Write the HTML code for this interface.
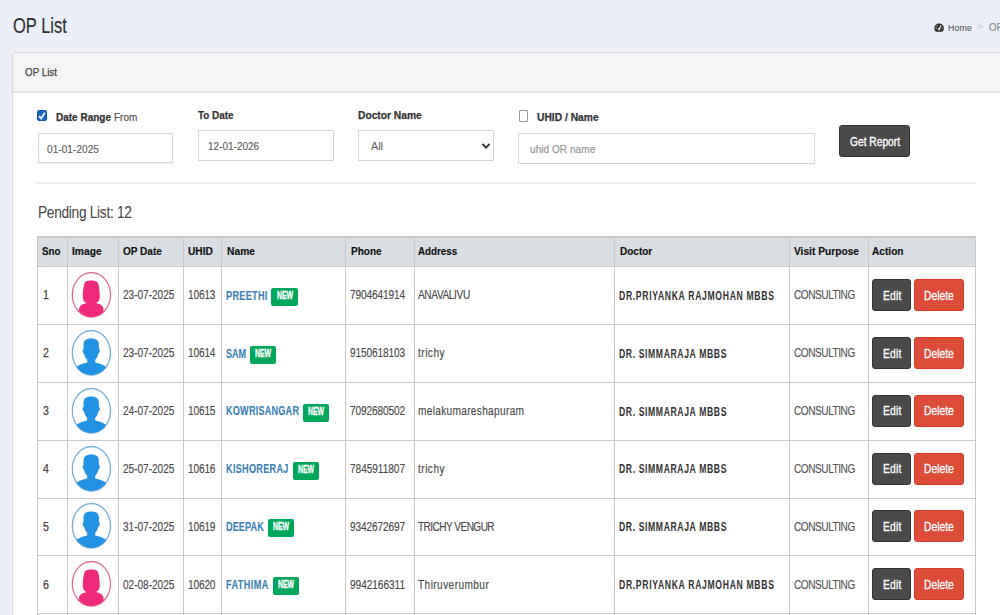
<!DOCTYPE html>
<html><head><meta charset="utf-8"><style>
html,body{margin:0;padding:0;}
body{width:1000px;height:615px;overflow:hidden;position:relative;background:#ebeff7;font-family:"Liberation Sans",sans-serif;}
.t{position:absolute;white-space:nowrap;transform-origin:0 50%;}
</style></head><body>
<svg width="0" height="0" style="position:absolute">
<defs>
<clipPath id="ce"><ellipse cx="20.4" cy="22.8" rx="19.1" ry="22.2"/></clipPath>
<g id="avf">
<ellipse cx="20.4" cy="22.8" rx="19.1" ry="22.2" fill="#fff" stroke="#dc6f90" stroke-width="1.3"/>
<g clip-path="url(#ce)" fill="#ef2a7a">
<path d="M15.5 31C13 30 11.8 28 11.8 24.5 11.8 20 12.4 15 13.2 12.2 14 9.6 15.8 8.6 20.3 8.6S26.6 9.6 27.4 12.2C28.2 15 28.8 20 28.8 24.5 28.8 28 27.6 30 25.1 31 28.5 32 31.8 33 32.5 36.5V47H8.1V36.5C8.8 33 12.1 32 15.5 31Z"/>
</g>
</g>
<g id="avm">
<ellipse cx="20.4" cy="22.8" rx="19.1" ry="22.2" fill="#fff" stroke="#72aedb" stroke-width="1.3"/>
<g clip-path="url(#ce)" fill="#2192e4">
<path d="M12.5 15.5C12.5 10.6 14.8 8.6 20.2 8.6S27.9 10.6 27.9 15.5V19C28.7 19.2 28.9 20.2 28.7 21.5 28.5 22.8 28.1 23.3 27.5 23.3 26.9 26.5 25.4 28.8 24.2 29.8V32.4C28.5 33.4 32.5 34.2 35.5 37.2V47H5V37.2C8 34.2 12 33.4 16.2 32.4V29.8C15 28.8 13.5 26.5 12.9 23.3 12.3 23.3 11.9 22.8 11.7 21.5 11.5 20.2 11.7 19.2 12.5 19Z"/>
</g>
</g>
</defs></svg>
<div class="t" style="left:13.20px;top:14.68px;font-size:22px;line-height:22px;color:#2f2f2f;transform:scaleX(0.7500);-webkit-text-stroke:0.15px #2f2f2f;">OP List</div>
<svg style="position:absolute;left:934px;top:22.5px" width="10.2" height="9.2" viewBox="0 0 11 10"><path d="M5.5 0.5C2.5 0.5 0.3 2.8 0.3 5.6c0 1.5.6 2.8 1.6 3.8h7.2c1-1 1.6-2.3 1.6-3.8C10.7 2.8 8.5.5 5.5.5z" fill="#333"/><path d="M5.5 6.6L7.6 2.6" stroke="#fff" stroke-width="1.2"/><circle cx="5.4" cy="6.8" r="1.1" fill="#fff"/><circle cx="2.3" cy="5.6" r=".6" fill="#fff"/><circle cx="3.3" cy="3" r=".6" fill="#fff"/><circle cx="8.7" cy="5.6" r=".6" fill="#fff"/></svg>
<div class="t" style="left:948.10px;top:22.70px;font-size:9.8px;line-height:9.8px;color:#555;transform:scaleX(0.9000);-webkit-text-stroke:0.1px #555;letter-spacing:0.131px;">Home</div>
<div class="t" style="left:977.50px;top:23.43px;font-size:8px;line-height:8px;color:#cfcfcf;transform:scaleX(1.0702);-webkit-text-stroke:0.3px #cfcfcf;">&gt;</div>
<div class="t" style="left:989.00px;top:22.73px;font-size:10px;line-height:10px;color:#888;transform:scaleX(0.9690);-webkit-text-stroke:0.1px #888;">OP</div>
<div style="position:absolute;left:9px;top:48px;width:1000px;height:600px;background:#eef1f6;border-radius:4px;"></div>
<div style="position:absolute;left:12px;top:52px;width:1000px;height:600px;background:#fff;border:1px solid #d6dade;border-radius:3px;box-sizing:border-box;"></div>
<div style="position:absolute;left:13px;top:53px;width:1000px;height:37.5px;background:#f5f5f5;border-radius:2px 0 0 0;"></div>
<div style="position:absolute;left:13px;top:90.5px;width:1000px;height:2px;background:#e4e4e4;"></div>
<div class="t" style="left:25.00px;top:66.97px;font-size:11.5px;line-height:11.5px;color:#444;transform:scaleX(0.8534);-webkit-text-stroke:0.25px #444;">OP List</div>
<div style="position:absolute;left:37px;top:110px;width:10px;height:11px;background:#1a67c8;border:1px solid #1257a8;box-sizing:border-box;border-radius:2px"></div>
<svg style="position:absolute;left:37px;top:110px" width="10" height="11" viewBox="0 0 10 11"><path d="M2 6.2L4.1 8.5 7.8 2.8" fill="none" stroke="#eaf4ff" stroke-width="1.8"/></svg>
<div class="t" style="left:55.70px;top:111.87px;font-size:11.5px;line-height:11.5px;color:#333;font-weight:bold;transform:scaleX(0.8693);-webkit-text-stroke:0.25px #333;">Date Range</div>
<div class="t" style="left:113.80px;top:111.87px;font-size:11.5px;line-height:11.5px;color:#555;transform:scaleX(0.8684);-webkit-text-stroke:0.25px #555;">From</div>
<div style="position:absolute;left:38px;top:133px;width:135px;height:30px;background:#fff;border:1px solid #d5d5d5;box-sizing:border-box;box-shadow:0 1px 1px rgba(0,0,0,.04)"></div>
<div class="t" style="left:47.40px;top:143.61px;font-size:11.8px;line-height:11.8px;color:#606060;transform:scaleX(0.8500);-webkit-text-stroke:0.15px #606060;letter-spacing:0.081px;">01-01-2025</div>
<div class="t" style="left:198.00px;top:110.27px;font-size:11.5px;line-height:11.5px;color:#333;font-weight:bold;transform:scaleX(0.8592);-webkit-text-stroke:0.25px #333;">To Date</div>
<div style="position:absolute;left:198px;top:130px;width:136px;height:31px;background:#fff;border:1px solid #d5d5d5;box-sizing:border-box;"></div>
<div class="t" style="left:208.40px;top:141.01px;font-size:11.8px;line-height:11.8px;color:#606060;transform:scaleX(0.8500);-webkit-text-stroke:0.15px #606060;letter-spacing:-0.013px;">12-01-2026</div>
<div class="t" style="left:358.30px;top:110.27px;font-size:11.5px;line-height:11.5px;color:#333;font-weight:bold;transform:scaleX(0.8900);-webkit-text-stroke:0.25px #333;">Doctor Name</div>
<div style="position:absolute;left:358px;top:130px;width:136px;height:31px;background:#fff;border:1px solid #d5d5d5;box-sizing:border-box;"></div>
<div class="t" style="left:370.80px;top:141.01px;font-size:11.8px;line-height:11.8px;color:#666;transform:scaleX(0.9150);-webkit-text-stroke:0.15px #666;">All</div>
<svg style="position:absolute;left:481px;top:142px" width="10" height="8" viewBox="0 0 10 8"><path d="M1.5 2L5 5.6 8.5 2" fill="none" stroke="#333" stroke-width="1.9"/></svg>
<div style="position:absolute;left:518.5px;top:110px;width:9.5px;height:11.5px;background:#fff;border:1.3px solid #9c9c9c;border-radius:1px;box-sizing:border-box"></div>
<div class="t" style="left:537.20px;top:112.47px;font-size:11.5px;line-height:11.5px;color:#333;font-weight:bold;transform:scaleX(0.8925);-webkit-text-stroke:0.25px #333;">UHID / Name</div>
<div style="position:absolute;left:518px;top:133px;width:297px;height:31px;background:#fff;border:1px solid #d5d5d5;box-sizing:border-box;"></div>
<div class="t" style="left:529.50px;top:143.61px;font-size:11.8px;line-height:11.8px;color:#9a9a9a;transform:scaleX(0.8500);-webkit-text-stroke:0.25px #9a9a9a;letter-spacing:0.062px;">uhid OR name</div>
<div style="position:absolute;left:839px;top:125px;width:71px;height:32px;background:#4a4a4a;border-radius:3px;border:1px solid #333;box-sizing:border-box;"></div>
<div class="t" style="left:850.00px;top:136.34px;font-size:12px;line-height:12px;color:#fff;transform:scaleX(0.8500);-webkit-text-stroke:0.35px #fff;letter-spacing:0.013px;">Get Report</div>
<div style="position:absolute;left:36px;top:182px;width:940px;height:2px;background:#ededed;"></div>
<div class="t" style="left:37.90px;top:204.69px;font-size:15.6px;line-height:15.6px;color:#474747;transform:scaleX(0.8800);-webkit-text-stroke:0.05px #474747;letter-spacing:-0.345px;">Pending List: 12</div>
<div style="position:absolute;left:37px;top:237px;width:938px;height:29px;background:#d9dee3;"></div>
<div style="position:absolute;left:37px;top:236px;width:939px;height:2px;background:#c6c9cc;"></div>
<div style="position:absolute;left:37px;top:266px;width:939px;height:1px;background:#c8c8c8;"></div>
<div style="position:absolute;left:37px;top:324px;width:939px;height:1px;background:#c8c8c8;"></div>
<div style="position:absolute;left:37px;top:382px;width:939px;height:1px;background:#c8c8c8;"></div>
<div style="position:absolute;left:37px;top:440px;width:939px;height:1px;background:#c8c8c8;"></div>
<div style="position:absolute;left:37px;top:498px;width:939px;height:1px;background:#c8c8c8;"></div>
<div style="position:absolute;left:37px;top:555px;width:939px;height:1px;background:#c8c8c8;"></div>
<div style="position:absolute;left:37px;top:613px;width:939px;height:1px;background:#c8c8c8;"></div>
<div style="position:absolute;left:37px;top:236px;width:1px;height:400px;background:#c9c9c9;"></div>
<div style="position:absolute;left:67px;top:236px;width:1px;height:400px;background:#c9c9c9;"></div>
<div style="position:absolute;left:118px;top:236px;width:1px;height:400px;background:#c9c9c9;"></div>
<div style="position:absolute;left:183px;top:236px;width:1px;height:400px;background:#c9c9c9;"></div>
<div style="position:absolute;left:221px;top:236px;width:1px;height:400px;background:#c9c9c9;"></div>
<div style="position:absolute;left:345px;top:236px;width:1px;height:400px;background:#c9c9c9;"></div>
<div style="position:absolute;left:414px;top:236px;width:1px;height:400px;background:#c9c9c9;"></div>
<div style="position:absolute;left:614px;top:236px;width:1px;height:400px;background:#c9c9c9;"></div>
<div style="position:absolute;left:789px;top:236px;width:1px;height:400px;background:#c9c9c9;"></div>
<div style="position:absolute;left:868px;top:236px;width:1px;height:400px;background:#c9c9c9;"></div>
<div style="position:absolute;left:975px;top:236px;width:1px;height:400px;background:#c9c9c9;"></div>
<div class="t" style="left:42.00px;top:245.69px;font-size:11px;line-height:11px;color:#111;font-weight:bold;transform:scaleX(0.8856);-webkit-text-stroke:0.15px #111;">Sno</div>
<div class="t" style="left:72.00px;top:245.69px;font-size:11px;line-height:11px;color:#111;font-weight:bold;transform:scaleX(0.9311);-webkit-text-stroke:0.15px #111;">Image</div>
<div class="t" style="left:123.20px;top:245.69px;font-size:11px;line-height:11px;color:#111;font-weight:bold;transform:scaleX(0.9109);-webkit-text-stroke:0.15px #111;">OP Date</div>
<div class="t" style="left:187.60px;top:245.69px;font-size:11px;line-height:11px;color:#111;font-weight:bold;transform:scaleX(0.9261);-webkit-text-stroke:0.15px #111;">UHID</div>
<div class="t" style="left:226.50px;top:245.69px;font-size:11px;line-height:11px;color:#111;font-weight:bold;transform:scaleX(0.9346);-webkit-text-stroke:0.15px #111;">Name</div>
<div class="t" style="left:350.60px;top:245.69px;font-size:11px;line-height:11px;color:#111;font-weight:bold;transform:scaleX(0.9103);-webkit-text-stroke:0.15px #111;">Phone</div>
<div class="t" style="left:418.40px;top:245.69px;font-size:11px;line-height:11px;color:#111;font-weight:bold;transform:scaleX(0.8906);-webkit-text-stroke:0.15px #111;">Address</div>
<div class="t" style="left:619.50px;top:245.69px;font-size:11px;line-height:11px;color:#111;font-weight:bold;transform:scaleX(0.9085);-webkit-text-stroke:0.15px #111;">Doctor</div>
<div class="t" style="left:793.50px;top:245.69px;font-size:11px;line-height:11px;color:#111;font-weight:bold;transform:scaleX(0.9272);-webkit-text-stroke:0.15px #111;">Visit Purpose</div>
<div class="t" style="left:872.00px;top:245.69px;font-size:11px;line-height:11px;color:#111;font-weight:bold;transform:scaleX(0.9205);-webkit-text-stroke:0.15px #111;">Action</div>
<div class="t" style="left:43.00px;top:289.44px;font-size:12px;line-height:12px;color:#444;transform:scaleX(0.8800);-webkit-text-stroke:0.25px #444;">1</div>
<svg style="position:absolute;left:71px;top:272px" width="41" height="47" viewBox="0 0 41 47"><use href="#avf"/></svg>
<div class="t" style="left:123.40px;top:289.44px;font-size:12px;line-height:12px;color:#4a4a4a;transform:scaleX(0.8400);-webkit-text-stroke:0.15px #4a4a4a;letter-spacing:-0.031px;">23-07-2025</div>
<div class="t" style="left:187.60px;top:289.44px;font-size:12px;line-height:12px;color:#4a4a4a;transform:scaleX(0.8400);-webkit-text-stroke:0.15px #4a4a4a;letter-spacing:-0.174px;">10613</div>
<div class="t" style="left:226.00px;top:289.74px;font-size:12px;line-height:12px;color:#3a80b4;font-weight:bold;transform:scaleX(0.7600);-webkit-text-stroke:0.1px #3a80b4;letter-spacing:0.390px;">PREETHI</div>
<div style="position:absolute;left:271.4px;top:288px;width:26.2px;height:18px;background:#00a65a;border-radius:2px;"></div>
<div class="t" style="left:276.60px;top:291.44px;font-size:10px;line-height:10px;color:#fff;font-weight:bold;transform:scaleX(0.6901);-webkit-text-stroke:0.3px #fff;">NEW</div>
<div class="t" style="left:350.40px;top:289.44px;font-size:12px;line-height:12px;color:#4a4a4a;transform:scaleX(0.8400);-webkit-text-stroke:0.15px #4a4a4a;letter-spacing:-0.126px;">7904641914</div>
<div class="t" style="left:418.40px;top:289.44px;font-size:12px;line-height:12px;color:#4a4a4a;transform:scaleX(0.8400);-webkit-text-stroke:0.15px #4a4a4a;letter-spacing:-0.435px;">ANAVALIVU</div>
<div class="t" style="left:619.40px;top:289.84px;font-size:12px;line-height:12px;color:#333;font-weight:bold;transform:scaleX(0.7200);letter-spacing:0.919px;">DR.PRIYANKA RAJMOHAN MBBS</div>
<div class="t" style="left:794.00px;top:289.44px;font-size:12px;line-height:12px;color:#555;transform:scaleX(0.8400);-webkit-text-stroke:0.15px #555;letter-spacing:-0.540px;">CONSULTING</div>
<div style="position:absolute;left:872px;top:279px;width:39px;height:32px;background:#4a4a4a;border-radius:3px;border:1px solid #333;box-sizing:border-box;"></div>
<div class="t" style="left:882.60px;top:289.64px;font-size:12px;line-height:12px;color:#fff;transform:scaleX(0.8600);-webkit-text-stroke:0.3px #fff;letter-spacing:0.179px;">Edit</div>
<div style="position:absolute;left:914px;top:279px;width:50px;height:32px;background:#dd4b39;border-radius:3px;border:1px solid #d33a27;box-sizing:border-box;"></div>
<div class="t" style="left:924.40px;top:289.64px;font-size:12px;line-height:12px;color:#fff;transform:scaleX(0.8600);-webkit-text-stroke:0.3px #fff;letter-spacing:-0.026px;">Delete</div>
<div class="t" style="left:43.00px;top:347.31px;font-size:12px;line-height:12px;color:#444;transform:scaleX(0.8800);-webkit-text-stroke:0.25px #444;">2</div>
<svg style="position:absolute;left:71px;top:330px" width="41" height="47" viewBox="0 0 41 47"><use href="#avm"/></svg>
<div class="t" style="left:123.40px;top:347.31px;font-size:12px;line-height:12px;color:#4a4a4a;transform:scaleX(0.8400);-webkit-text-stroke:0.15px #4a4a4a;letter-spacing:-0.031px;">23-07-2025</div>
<div class="t" style="left:187.60px;top:347.31px;font-size:12px;line-height:12px;color:#4a4a4a;transform:scaleX(0.8400);-webkit-text-stroke:0.15px #4a4a4a;letter-spacing:-0.174px;">10614</div>
<div class="t" style="left:226.00px;top:347.61px;font-size:12px;line-height:12px;color:#3a80b4;font-weight:bold;transform:scaleX(0.7600);-webkit-text-stroke:0.1px #3a80b4;letter-spacing:-0.117px;">SAM</div>
<div style="position:absolute;left:249.8px;top:346px;width:26.2px;height:18px;background:#00a65a;border-radius:2px;"></div>
<div class="t" style="left:255.00px;top:349.44px;font-size:10px;line-height:10px;color:#fff;font-weight:bold;transform:scaleX(0.6901);-webkit-text-stroke:0.3px #fff;">NEW</div>
<div class="t" style="left:350.40px;top:347.31px;font-size:12px;line-height:12px;color:#4a4a4a;transform:scaleX(0.8400);-webkit-text-stroke:0.15px #4a4a4a;letter-spacing:-0.126px;">9150618103</div>
<div class="t" style="left:418.40px;top:347.31px;font-size:12px;line-height:12px;color:#4a4a4a;transform:scaleX(0.8400);-webkit-text-stroke:0.15px #4a4a4a;letter-spacing:0.579px;">trichy</div>
<div class="t" style="left:619.40px;top:347.71px;font-size:12px;line-height:12px;color:#333;font-weight:bold;transform:scaleX(0.7200);letter-spacing:0.839px;">DR. SIMMARAJA MBBS</div>
<div class="t" style="left:794.00px;top:347.31px;font-size:12px;line-height:12px;color:#555;transform:scaleX(0.8400);-webkit-text-stroke:0.15px #555;letter-spacing:-0.540px;">CONSULTING</div>
<div style="position:absolute;left:872px;top:337px;width:39px;height:32px;background:#4a4a4a;border-radius:3px;border:1px solid #333;box-sizing:border-box;"></div>
<div class="t" style="left:882.60px;top:347.51px;font-size:12px;line-height:12px;color:#fff;transform:scaleX(0.8600);-webkit-text-stroke:0.3px #fff;letter-spacing:0.179px;">Edit</div>
<div style="position:absolute;left:914px;top:337px;width:50px;height:32px;background:#dd4b39;border-radius:3px;border:1px solid #d33a27;box-sizing:border-box;"></div>
<div class="t" style="left:924.40px;top:347.51px;font-size:12px;line-height:12px;color:#fff;transform:scaleX(0.8600);-webkit-text-stroke:0.3px #fff;letter-spacing:-0.026px;">Delete</div>
<div class="t" style="left:43.00px;top:405.18px;font-size:12px;line-height:12px;color:#444;transform:scaleX(0.8800);-webkit-text-stroke:0.25px #444;">3</div>
<svg style="position:absolute;left:71px;top:388px" width="41" height="47" viewBox="0 0 41 47"><use href="#avm"/></svg>
<div class="t" style="left:123.40px;top:405.18px;font-size:12px;line-height:12px;color:#4a4a4a;transform:scaleX(0.8400);-webkit-text-stroke:0.15px #4a4a4a;letter-spacing:-0.031px;">24-07-2025</div>
<div class="t" style="left:187.60px;top:405.18px;font-size:12px;line-height:12px;color:#4a4a4a;transform:scaleX(0.8400);-webkit-text-stroke:0.15px #4a4a4a;letter-spacing:-0.174px;">10615</div>
<div class="t" style="left:226.00px;top:405.48px;font-size:12px;line-height:12px;color:#3a80b4;font-weight:bold;transform:scaleX(0.7600);-webkit-text-stroke:0.1px #3a80b4;letter-spacing:0.272px;">KOWRISANGAR</div>
<div style="position:absolute;left:303.0px;top:404px;width:26.2px;height:18px;background:#00a65a;border-radius:2px;"></div>
<div class="t" style="left:308.20px;top:407.44px;font-size:10px;line-height:10px;color:#fff;font-weight:bold;transform:scaleX(0.6901);-webkit-text-stroke:0.3px #fff;">NEW</div>
<div class="t" style="left:350.40px;top:405.18px;font-size:12px;line-height:12px;color:#4a4a4a;transform:scaleX(0.8400);-webkit-text-stroke:0.15px #4a4a4a;letter-spacing:-0.126px;">7092680502</div>
<div class="t" style="left:418.40px;top:405.18px;font-size:12px;line-height:12px;color:#4a4a4a;transform:scaleX(0.8400);-webkit-text-stroke:0.15px #4a4a4a;letter-spacing:0.398px;">melakumareshapuram</div>
<div class="t" style="left:619.40px;top:405.58px;font-size:12px;line-height:12px;color:#333;font-weight:bold;transform:scaleX(0.7200);letter-spacing:0.839px;">DR. SIMMARAJA MBBS</div>
<div class="t" style="left:794.00px;top:405.18px;font-size:12px;line-height:12px;color:#555;transform:scaleX(0.8400);-webkit-text-stroke:0.15px #555;letter-spacing:-0.540px;">CONSULTING</div>
<div style="position:absolute;left:872px;top:395px;width:39px;height:32px;background:#4a4a4a;border-radius:3px;border:1px solid #333;box-sizing:border-box;"></div>
<div class="t" style="left:882.60px;top:405.38px;font-size:12px;line-height:12px;color:#fff;transform:scaleX(0.8600);-webkit-text-stroke:0.3px #fff;letter-spacing:0.179px;">Edit</div>
<div style="position:absolute;left:914px;top:395px;width:50px;height:32px;background:#dd4b39;border-radius:3px;border:1px solid #d33a27;box-sizing:border-box;"></div>
<div class="t" style="left:924.40px;top:405.38px;font-size:12px;line-height:12px;color:#fff;transform:scaleX(0.8600);-webkit-text-stroke:0.3px #fff;letter-spacing:-0.026px;">Delete</div>
<div class="t" style="left:43.00px;top:463.05px;font-size:12px;line-height:12px;color:#444;transform:scaleX(0.8800);-webkit-text-stroke:0.25px #444;">4</div>
<svg style="position:absolute;left:71px;top:446px" width="41" height="47" viewBox="0 0 41 47"><use href="#avm"/></svg>
<div class="t" style="left:123.40px;top:463.05px;font-size:12px;line-height:12px;color:#4a4a4a;transform:scaleX(0.8400);-webkit-text-stroke:0.15px #4a4a4a;letter-spacing:-0.031px;">25-07-2025</div>
<div class="t" style="left:187.60px;top:463.05px;font-size:12px;line-height:12px;color:#4a4a4a;transform:scaleX(0.8400);-webkit-text-stroke:0.15px #4a4a4a;letter-spacing:-0.174px;">10616</div>
<div class="t" style="left:226.00px;top:463.35px;font-size:12px;line-height:12px;color:#3a80b4;font-weight:bold;transform:scaleX(0.7600);-webkit-text-stroke:0.1px #3a80b4;letter-spacing:0.382px;">KISHORERAJ</div>
<div style="position:absolute;left:292.5px;top:462px;width:26.2px;height:18px;background:#00a65a;border-radius:2px;"></div>
<div class="t" style="left:297.70px;top:465.44px;font-size:10px;line-height:10px;color:#fff;font-weight:bold;transform:scaleX(0.6901);-webkit-text-stroke:0.3px #fff;">NEW</div>
<div class="t" style="left:350.40px;top:463.05px;font-size:12px;line-height:12px;color:#4a4a4a;transform:scaleX(0.8400);-webkit-text-stroke:0.15px #4a4a4a;letter-spacing:-0.037px;">7845911807</div>
<div class="t" style="left:418.40px;top:463.05px;font-size:12px;line-height:12px;color:#4a4a4a;transform:scaleX(0.8400);-webkit-text-stroke:0.15px #4a4a4a;letter-spacing:0.579px;">trichy</div>
<div class="t" style="left:619.40px;top:463.45px;font-size:12px;line-height:12px;color:#333;font-weight:bold;transform:scaleX(0.7200);letter-spacing:0.839px;">DR. SIMMARAJA MBBS</div>
<div class="t" style="left:794.00px;top:463.05px;font-size:12px;line-height:12px;color:#555;transform:scaleX(0.8400);-webkit-text-stroke:0.15px #555;letter-spacing:-0.540px;">CONSULTING</div>
<div style="position:absolute;left:872px;top:453px;width:39px;height:32px;background:#4a4a4a;border-radius:3px;border:1px solid #333;box-sizing:border-box;"></div>
<div class="t" style="left:882.60px;top:463.25px;font-size:12px;line-height:12px;color:#fff;transform:scaleX(0.8600);-webkit-text-stroke:0.3px #fff;letter-spacing:0.179px;">Edit</div>
<div style="position:absolute;left:914px;top:453px;width:50px;height:32px;background:#dd4b39;border-radius:3px;border:1px solid #d33a27;box-sizing:border-box;"></div>
<div class="t" style="left:924.40px;top:463.25px;font-size:12px;line-height:12px;color:#fff;transform:scaleX(0.8600);-webkit-text-stroke:0.3px #fff;letter-spacing:-0.026px;">Delete</div>
<div class="t" style="left:43.00px;top:520.92px;font-size:12px;line-height:12px;color:#444;transform:scaleX(0.8800);-webkit-text-stroke:0.25px #444;">5</div>
<svg style="position:absolute;left:71px;top:503px" width="41" height="47" viewBox="0 0 41 47"><use href="#avm"/></svg>
<div class="t" style="left:123.40px;top:520.92px;font-size:12px;line-height:12px;color:#4a4a4a;transform:scaleX(0.8400);-webkit-text-stroke:0.15px #4a4a4a;letter-spacing:-0.031px;">31-07-2025</div>
<div class="t" style="left:187.60px;top:520.92px;font-size:12px;line-height:12px;color:#4a4a4a;transform:scaleX(0.8400);-webkit-text-stroke:0.15px #4a4a4a;letter-spacing:-0.174px;">10619</div>
<div class="t" style="left:226.00px;top:521.22px;font-size:12px;line-height:12px;color:#3a80b4;font-weight:bold;transform:scaleX(0.7600);-webkit-text-stroke:0.1px #3a80b4;letter-spacing:0.125px;">DEEPAK</div>
<div style="position:absolute;left:267.7px;top:519px;width:26.2px;height:18px;background:#00a65a;border-radius:2px;"></div>
<div class="t" style="left:272.90px;top:522.43px;font-size:10px;line-height:10px;color:#fff;font-weight:bold;transform:scaleX(0.6901);-webkit-text-stroke:0.3px #fff;">NEW</div>
<div class="t" style="left:350.40px;top:520.92px;font-size:12px;line-height:12px;color:#4a4a4a;transform:scaleX(0.8400);-webkit-text-stroke:0.15px #4a4a4a;letter-spacing:-0.126px;">9342672697</div>
<div class="t" style="left:418.40px;top:520.92px;font-size:12px;line-height:12px;color:#4a4a4a;transform:scaleX(0.8400);-webkit-text-stroke:0.15px #4a4a4a;letter-spacing:-0.656px;">TRICHY VENGUR</div>
<div class="t" style="left:619.40px;top:521.32px;font-size:12px;line-height:12px;color:#333;font-weight:bold;transform:scaleX(0.7200);letter-spacing:0.839px;">DR. SIMMARAJA MBBS</div>
<div class="t" style="left:794.00px;top:520.92px;font-size:12px;line-height:12px;color:#555;transform:scaleX(0.8400);-webkit-text-stroke:0.15px #555;letter-spacing:-0.540px;">CONSULTING</div>
<div style="position:absolute;left:872px;top:510px;width:39px;height:32px;background:#4a4a4a;border-radius:3px;border:1px solid #333;box-sizing:border-box;"></div>
<div class="t" style="left:882.60px;top:521.12px;font-size:12px;line-height:12px;color:#fff;transform:scaleX(0.8600);-webkit-text-stroke:0.3px #fff;letter-spacing:0.179px;">Edit</div>
<div style="position:absolute;left:914px;top:510px;width:50px;height:32px;background:#dd4b39;border-radius:3px;border:1px solid #d33a27;box-sizing:border-box;"></div>
<div class="t" style="left:924.40px;top:521.12px;font-size:12px;line-height:12px;color:#fff;transform:scaleX(0.8600);-webkit-text-stroke:0.3px #fff;letter-spacing:-0.026px;">Delete</div>
<div class="t" style="left:43.00px;top:578.79px;font-size:12px;line-height:12px;color:#444;transform:scaleX(0.8800);-webkit-text-stroke:0.25px #444;">6</div>
<svg style="position:absolute;left:71px;top:561px" width="41" height="47" viewBox="0 0 41 47"><use href="#avf"/></svg>
<div class="t" style="left:123.40px;top:578.79px;font-size:12px;line-height:12px;color:#4a4a4a;transform:scaleX(0.8400);-webkit-text-stroke:0.15px #4a4a4a;letter-spacing:-0.031px;">02-08-2025</div>
<div class="t" style="left:187.60px;top:578.79px;font-size:12px;line-height:12px;color:#4a4a4a;transform:scaleX(0.8400);-webkit-text-stroke:0.15px #4a4a4a;letter-spacing:-0.174px;">10620</div>
<div class="t" style="left:226.00px;top:579.09px;font-size:12px;line-height:12px;color:#3a80b4;font-weight:bold;transform:scaleX(0.7600);-webkit-text-stroke:0.1px #3a80b4;letter-spacing:0.554px;">FATHIMA</div>
<div style="position:absolute;left:272.6px;top:577px;width:26.2px;height:18px;background:#00a65a;border-radius:2px;"></div>
<div class="t" style="left:277.80px;top:580.43px;font-size:10px;line-height:10px;color:#fff;font-weight:bold;transform:scaleX(0.6901);-webkit-text-stroke:0.3px #fff;">NEW</div>
<div class="t" style="left:350.40px;top:578.79px;font-size:12px;line-height:12px;color:#4a4a4a;transform:scaleX(0.8400);-webkit-text-stroke:0.15px #4a4a4a;letter-spacing:-0.037px;">9942166311</div>
<div class="t" style="left:418.40px;top:578.79px;font-size:12px;line-height:12px;color:#4a4a4a;transform:scaleX(0.8400);-webkit-text-stroke:0.15px #4a4a4a;letter-spacing:0.518px;">Thiruverumbur</div>
<div class="t" style="left:619.40px;top:579.19px;font-size:12px;line-height:12px;color:#333;font-weight:bold;transform:scaleX(0.7200);letter-spacing:0.919px;">DR.PRIYANKA RAJMOHAN MBBS</div>
<div class="t" style="left:794.00px;top:578.79px;font-size:12px;line-height:12px;color:#555;transform:scaleX(0.8400);-webkit-text-stroke:0.15px #555;letter-spacing:-0.540px;">CONSULTING</div>
<div style="position:absolute;left:872px;top:568px;width:39px;height:32px;background:#4a4a4a;border-radius:3px;border:1px solid #333;box-sizing:border-box;"></div>
<div class="t" style="left:882.60px;top:578.99px;font-size:12px;line-height:12px;color:#fff;transform:scaleX(0.8600);-webkit-text-stroke:0.3px #fff;letter-spacing:0.179px;">Edit</div>
<div style="position:absolute;left:914px;top:568px;width:50px;height:32px;background:#dd4b39;border-radius:3px;border:1px solid #d33a27;box-sizing:border-box;"></div>
<div class="t" style="left:924.40px;top:578.99px;font-size:12px;line-height:12px;color:#fff;transform:scaleX(0.8600);-webkit-text-stroke:0.3px #fff;letter-spacing:-0.026px;">Delete</div>
</body></html>
